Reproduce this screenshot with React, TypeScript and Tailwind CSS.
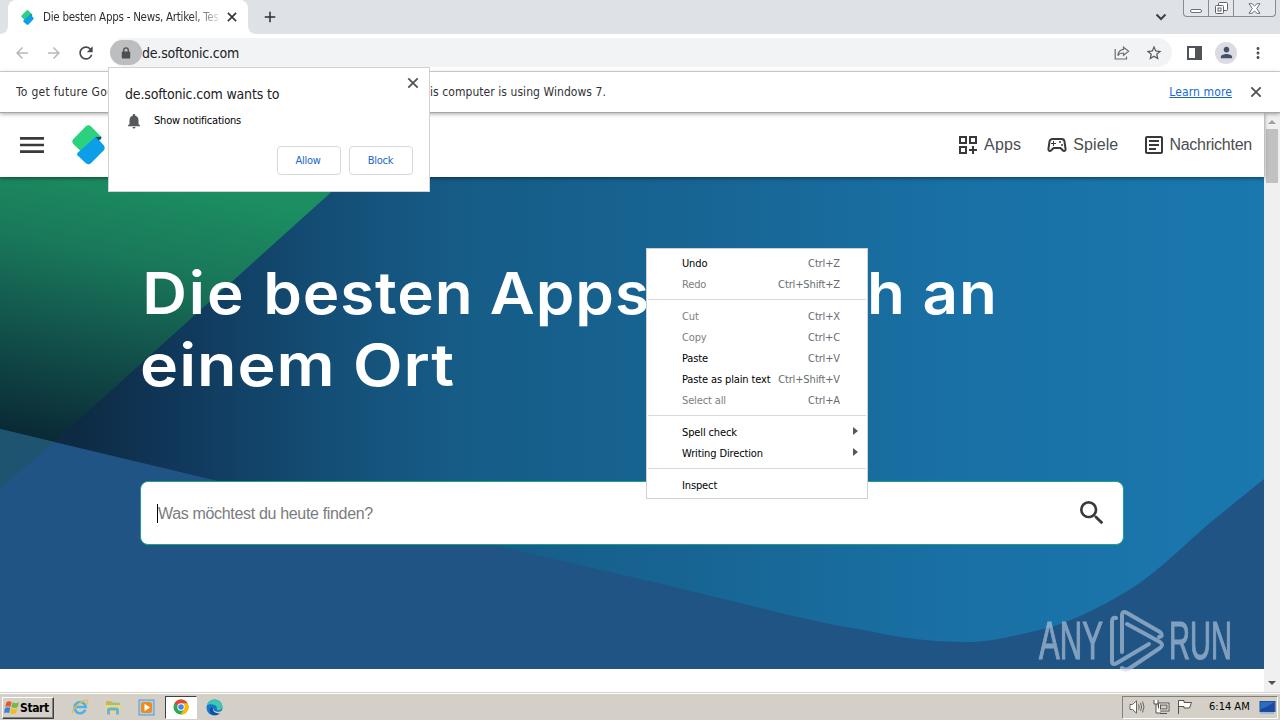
import type { ReactNode } from "react";
import {
  MdArrowBack,
  MdArrowForward,
  MdMenu,
  MdMoreVert,
  MdNotifications,
  MdOutlineArticle,
  MdOutlineDashboardCustomize,
  MdOutlineSportsEsports,
  MdPerson,
  MdRefresh,
  MdSearch,
  MdStarBorder,
  MdAdd,
} from "react-icons/md";

function SoftonicMark({ className }: { className: string }) {
  return (
    <svg viewBox="0 0 34 41" className={className} aria-hidden="true">
      <path d="M14.3 1.2Q17 -0.8 19.5 1.2L30 12L24 13.5L9 27L1.4 19.5Q-0.8 16.8 1.4 14.2Z" fill="#2bd17e" />
      <path d="M24.8 11.8L32.6 20.8Q34.8 23.5 32.6 26.2L19.5 39.4Q17 41.4 14.3 39.4L5.8 31.2Q4.6 30 5.8 28.4Z" fill="#0c9fe8" />
      <path d="M24.2 12.3L30.5 12L29.8 14.5L27.2 15.5Z" fill="#0b4f6c" />
    </svg>
  );
}

function CloseIcon({ className }: { className: string }) {
  return (
    <svg viewBox="0 0 16 16" className={className} fill="none" stroke="currentColor" strokeWidth="1.8" aria-hidden="true">
      <path d="M3.3 3.3L12.7 12.7M12.7 3.3L3.3 12.7" />
    </svg>
  );
}

function TabStrip() {
  return (
    <div className="flex h-[34px] shrink-0 items-stretch bg-[#dee1e6]">
      <div className="flex w-2 items-end bg-white">
        <div className="h-full w-2 rounded-br-lg bg-[#dee1e6]" />
      </div>
      <div className="flex w-60 items-center rounded-t-lg bg-white pl-[13px]">
        <SoftonicMark className="h-[15px] w-[13px]" />
        <span className="ml-[9px] mt-[2px] w-[175px] overflow-hidden whitespace-nowrap bg-linear-to-r from-[#2a2c30] from-85% to-[#d8dadd] bg-clip-text text-[11.5px] tracking-[-0.27px] text-transparent">
          Die besten Apps - News, Artikel, Tests
        </span>
        <CloseIcon className="ml-[7px] size-[14px] text-[#303236]" />
      </div>
      <div className="w-2 bg-white">
        <div className="h-full w-2 rounded-bl-lg bg-[#dee1e6]" />
      </div>
      <div className="flex flex-1 items-center pl-[5px]">
        <MdAdd className="size-[18px] text-[#2c2e33]" />
        <div className="flex-1" />
        <svg viewBox="0 0 16 16" className="size-4" fill="none" stroke="#3c4043" strokeWidth="2" aria-hidden="true">
          <path d="M3.5 5.5L8 10L12.5 5.5" />
        </svg>
        <div className="ml-[14px] mr-[4px] flex h-[17px] w-[93px] self-start rounded-b-[4px] border border-t-0 border-[#868b94] bg-[#e3e6eb]">
          <div className="flex w-[25px] items-end justify-center border-r border-[#868b94] pb-[3px]">
            <div className="h-1 w-3 rounded-xs border border-[#6b6f78] bg-white" />
          </div>
          <div className="flex w-[25px] items-center justify-center border-r border-[#868b94]">
            <svg viewBox="0 0 13 13" className="size-[13px]" fill="#fff" stroke="#5d616a" aria-hidden="true">
              <rect x="3.5" y="0.5" width="9" height="8" rx="1" />
              <rect x="0.5" y="3.5" width="8" height="8" rx="1" />
              <rect x="3" y="6" width="3" height="3" />
            </svg>
          </div>
          <div className="flex flex-1 items-center justify-center">
            <svg viewBox="0 0 13 11" className="h-[11px] w-[13px]" fill="#fff" stroke="#6b6f78" aria-hidden="true">
              <path d="M1 .7H4L6.5 3L9 .7H12L8.7 5.5L12 10.3H9L6.5 8L4 10.3H1L4.3 5.5Z" />
            </svg>
          </div>
        </div>
      </div>
    </div>
  );
}

function Toolbar() {
  return (
    <div className="flex h-[38px] shrink-0 items-center border-b border-[#d5d7da] bg-white pl-[13px]">
      <MdArrowBack className="size-[18px] text-[#b6b8bb]" />
      <MdArrowForward className="ml-[14px] size-[18px] text-[#b6b8bb]" />
      <MdRefresh className="ml-[13px] size-5 text-[#46494d]" />
      <div className="ml-[14px] flex h-[29px] w-[1062px] items-center rounded-full bg-[#f1f3f4]">
        <div className="flex h-[25px] w-8 items-center justify-center rounded-full bg-[#bcbebf]">
          <svg viewBox="0 0 10 12" className="h-3 w-[10px]" aria-hidden="true">
            <path d="M2.7 5V3.2A2.3 2.3 0 0 1 7.3 3.2V5" fill="none" stroke="#4d4f52" strokeWidth="1.3" />
            <rect x="0.8" y="4.5" width="8.4" height="7" rx="0.8" fill="#4d4f52" />
          </svg>
        </div>
        <span className="mt-px text-[14px] tracking-[-0.2px] text-[#202124]">de.softonic.com</span>
        <div className="flex-1" />
        <svg viewBox="0 0 16 14" className="h-[14px] w-4" fill="none" stroke="#6a6d71" strokeWidth="1.2" aria-hidden="true">
          <path d="M1.2 3V13H12.5V10.5" />
          <path d="M9.5 1.2L14.6 5.2L9.5 9.2V7C7 7 5 7.8 3.8 9.6C4.2 6.4 6 3.8 9.5 3.4Z" />
        </svg>
        <MdStarBorder className="ml-[15px] mr-[9px] size-[18px] text-[#55585c]" />
      </div>
      <div className="ml-[15px] flex h-[14px] w-[15px] border-2 border-[#505357]">
        <div className="ml-auto w-[5px] bg-[#505357]" />
      </div>
      <div className="ml-[13px] flex size-[22px] items-center justify-center rounded-full bg-[#dadce2]">
        <MdPerson className="size-[17px] text-[#44506e]" />
      </div>
      <MdMoreVert className="ml-[12px] size-[18px] text-[#505357]" />
    </div>
  );
}

function InfoBar() {
  return (
    <div className="z-10 flex h-[41px] shrink-0 items-center border-b border-[#a5a6a8] bg-white pl-4 pr-4 text-[12px] text-[#303236] shadow-[0_1px_4px_rgba(0,0,0,0.35)]">
      <span className="w-[414px] overflow-hidden whitespace-nowrap tracking-[0.28px]">
        To get future Google Chrome updates, you'll need Windows 10 or later. Th
      </span>
      <span className="whitespace-nowrap tracking-[0.06px]">is computer is using Windows 7.</span>
      <div className="flex-1" />
      <span className="tracking-[0.12px] text-[#1967d2] underline">Learn more</span>
      <CloseIcon className="ml-[16px] size-4 text-[#505357]" />
    </div>
  );
}

function NavItem({ icon, children }: { icon: ReactNode; children: ReactNode }) {
  return (
    <div className="flex items-center gap-[3px] whitespace-nowrap text-[16px] text-[#4c4d50]">
      {icon}
      {children}
    </div>
  );
}

function HeroArt() {
  return (
    <svg viewBox="0 177 1264 492" className="absolute inset-0 h-full w-full" aria-hidden="true">
      <defs>
        <linearGradient id="sea" gradientUnits="userSpaceOnUse" x1="0" y1="0" x2="1264" y2="0">
          <stop offset="0.06" stopColor="#0d2a42" />
          <stop offset="0.14" stopColor="#10385a" />
          <stop offset="0.26" stopColor="#144e76" />
          <stop offset="0.36" stopColor="#165c87" />
          <stop offset="0.52" stopColor="#176391" />
          <stop offset="0.75" stopColor="#1970a4" />
          <stop offset="1" stopColor="#1a78af" />
        </linearGradient>
        <linearGradient id="leaf" gradientUnits="userSpaceOnUse" x1="140" y1="177" x2="85" y2="445">
          <stop offset="0" stopColor="#1c8e61" />
          <stop offset="0.3" stopColor="#19785a" />
          <stop offset="0.65" stopColor="#12504a" />
          <stop offset="1" stopColor="#0a2a36" />
        </linearGradient>
      </defs>
      <rect x="0" y="177" width="1264" height="492" fill="url(#sea)" />
      <path d="M0 177H348L45 450L0 440Z" fill="url(#leaf)" />
      <path
        d="M0 429L222 482L502 547L640 579C720 597 800 620 864 630C900 638 930 642 966 642C990 642 1010 637 1048 628C1085 617 1130 592 1154 572C1175 555 1190 540 1211 522L1264 479V669H0Z"
        fill="#205484"
      />
      <path d="M0 429L54 442L0 489Z" fill="#1f5470" />
    </svg>
  );
}

function Page() {
  return (
    <div className="flex min-h-0 flex-1 bg-white">
      <div className="flex w-[1264px] flex-col font-['Liberation_Sans',sans-serif]">
        <header className="relative z-[1] flex h-16 shrink-0 items-center pl-4 pr-3 shadow-[0_1px_4px_rgba(0,0,0,0.5)]">
          <MdMenu className="size-8 text-[#38393b]" />
          <SoftonicMark className="ml-6 h-10 w-[33px]" />
          <div className="flex-1" />
          <div className="flex gap-6">
            <NavItem icon={<MdOutlineDashboardCustomize className="size-6 text-[#38393b]" />}>
              <span className="pl-px tracking-[0.2px]">Apps</span>
            </NavItem>
            <NavItem icon={<MdOutlineSportsEsports className="size-6 text-[#38393b]" />}>
              <span className="pl-px tracking-[0.1px]">Spiele</span>
            </NavItem>
            <NavItem icon={<MdOutlineArticle className="size-6 text-[#38393b]" />}>
              <span className="tracking-[-0.25px]">Nachrichten</span>
            </NavItem>
          </div>
        </header>
        <section className="relative h-[492px] shrink-0">
          <HeroArt />
          <div className="relative flex flex-col pl-[140px] pr-[140px] pt-[80px]">
            <h1 className="h-[224px] whitespace-nowrap font-['Inter',sans-serif] text-[58px] font-semibold leading-[72px] tracking-[0.9px] text-white">
              <span className="block origin-left scale-x-[1.067] pl-[2px]">
                <span className="tracking-[1.9px]">Die </span>
                <span className="tracking-[0.8px]">besten </span>
                <span>Apps </span>
                <span className="tracking-[2.4px]">einfac</span>h an
              </span>
              <span className="block origin-left scale-x-[1.112]">einem Ort</span>
            </h1>
            <div className="flex h-16 items-center rounded-lg border border-[#20a08a] bg-white pl-4 pr-[15px]">
              <div className="h-[19px] w-px bg-black" />
              <span className="mt-px text-[16px] tracking-[-0.33px] text-[#7b7c7e]">Was möchtest du heute finden?</span>
              <div className="flex-1" />
              <MdSearch className="size-8 text-[#38393b]" />
            </div>
          </div>
        </section>
      </div>
      <div className="flex w-4 flex-col items-center bg-[#f0f0f0] pt-[7px]">
        <div className="border-x-4 border-b-4 border-x-transparent border-b-[#a0a0a0]" />
        <div className="mt-[5px] h-[54px] w-3 bg-[#c1c1c1]" />
        <div className="flex-1" />
        <div className="mb-[7px] border-x-4 border-t-4 border-x-transparent border-t-[#505050]" />
      </div>
    </div>
  );
}

function PermissionPopup() {
  return (
    <div className="absolute left-[108px] top-[67px] z-20 flex h-[125px] w-[322px] flex-col border border-[#d0d2d5] bg-white px-4 text-[#202124]">
      <div className="flex h-[36px] items-end justify-between">
        <span className="text-[14px] leading-[20px] tracking-[-0.17px]">de.softonic.com wants to</span>
        <CloseIcon className="-mr-[8px] mb-[13px] size-4 text-[#505357]" />
      </div>
      <div className="mt-[8px] flex h-[18px] items-center">
        <MdNotifications className="size-[18px] text-[#55585c]" />
        <span className="ml-[11px] text-[11px] tracking-[-0.2px] text-black">Show notifications</span>
      </div>
      <div className="mt-[16px] flex justify-end gap-2 text-[11px] tracking-[-0.25px] text-[#1967c8]">
        <div className="flex h-[29px] w-16 items-center justify-center rounded-[4px] border border-[#d5d8dc] pr-[2px] pt-px">Allow</div>
        <div className="flex h-[29px] w-16 items-center justify-center rounded-[4px] border border-[#d5d8dc] pr-px pt-px">Block</div>
      </div>
    </div>
  );
}

type Entry = { label: string; keys?: string; off?: boolean; sub?: boolean };

const groups: Entry[][] = [
  [
    { label: "Undo", keys: "Ctrl+Z" },
    { label: "Redo", keys: "Ctrl+Shift+Z", off: true },
  ],
  [
    { label: "Cut", keys: "Ctrl+X", off: true },
    { label: "Copy", keys: "Ctrl+C", off: true },
    { label: "Paste", keys: "Ctrl+V" },
    { label: "Paste as plain text", keys: "Ctrl+Shift+V" },
    { label: "Select all", keys: "Ctrl+A", off: true },
  ],
  [
    { label: "Spell check", sub: true },
    { label: "Writing Direction", sub: true },
  ],
  [{ label: "Inspect" }],
];

function ContextMenu() {
  return (
    <div className="absolute left-[646px] top-[248px] z-20 h-[251px] w-[222px] border border-[#cfd1d4] bg-white px-px pt-1 text-[11px] tracking-[-0.13px]">
      {groups.map((group, g) => (
        <div key={g} className={g > 0 ? "mt-[4px] border-t border-[#d8dadc] pt-[6px]" : ""}>
          {group.map((e) => (
            <div key={e.label} className="flex h-[21px] items-center pl-[34px] pr-2">
              <span className={e.off ? "mt-[2px] text-[#7c7e80]" : "mt-[2px] text-black"}>{e.label}</span>
              <div className="flex-1" />
              {e.keys && <span className="mr-[18px] mt-[2px] text-[#6a6c6e]">{e.keys}</span>}
              {e.sub && <div className="mb-[3px] border-y-4 border-l-[5px] border-y-transparent border-l-[#55585c]" />}
            </div>
          ))}
        </div>
      ))}
    </div>
  );
}

function Watermark() {
  return (
    <svg viewBox="0 0 196 66" className="absolute left-[1037px] top-[608px] z-10 h-[66px] w-[196px] opacity-60" aria-hidden="true">
      <g fill="#c3d3e4" stroke="#c3d3e4" strokeWidth="1.2" fontFamily="Liberation Sans Narrow, Liberation Sans, sans-serif" fontSize="53">
        <text x="2" y="51" textLength="64" lengthAdjust="spacingAndGlyphs">ANY</text>
        <text x="132" y="51" textLength="63" lengthAdjust="spacingAndGlyphs">RUN</text>
      </g>
      <g fill="none" stroke="#c3d3e4" strokeWidth="4" strokeLinecap="round" strokeLinejoin="round">
        <path d="M79 10Q75 9 75 14V53Q75 58 80 55L112 36" />
        <path d="M85 44V8Q85 2 90 5L123 24Q127 28 122 29" />
        <path d="M90 16L123 34Q127 37 123 40L93 60Q88 63 85 60" />
      </g>
    </svg>
  );
}

function Taskbar() {
  return (
    <div className="flex h-7 shrink-0 items-center border-t border-[#d4d0c8] bg-[#d4d0c8] pl-[2px] shadow-[inset_0_1px_0_#fff]">
      <div className="mt-[2px] flex h-[22px] w-[52px] items-center border border-b-[#404040] border-l-white border-r-[#404040] border-t-white pl-px shadow-[inset_-1px_-1px_0_#808080]">
        <svg viewBox="0 0 16 15" className="h-[15px] w-4 shrink-0" aria-hidden="true">
          <path d="M2.5 2Q5 .5 7.5 2L6.5 7Q4 5.5 1.2 7Z" fill="#e8572a" />
          <path d="M8.5 2.3Q11.5 4 15 2.2L13.6 7.2Q10.5 8.8 7.4 7.2Z" fill="#77b843" />
          <path d="M1 8Q3.8 6.6 6.3 8L5.1 13Q2.4 11.8 0 13Z" fill="#3b83cf" />
          <path d="M7.2 8.3Q10.3 9.8 13.4 8.2L12.1 13.2Q9 14.8 6 13.2Z" fill="#f5bd25" />
        </svg>
        <span className="text-[12px] font-bold tracking-[-0.4px] text-black">Start</span>
      </div>
      <svg viewBox="0 0 18 18" className="ml-[17px] mt-px size-[18px]" fill="none" aria-hidden="true">
        <path d="M14.3 11.8A5.6 5.6 0 1 1 14.7 9H5" stroke="#4fb0e4" strokeWidth="2.6" />
        <path d="M1.5 15.5C-.5 12 12 .5 16.3 2.3C17.5 3 16.5 5 16 6" stroke="#e9bd3e" strokeWidth="1.3" />
      </svg>
      <svg viewBox="0 0 18 18" className="ml-[15px] mt-px size-[18px]" aria-hidden="true">
        <path d="M2 3H7L8.5 4.5H15V14H2Z" fill="#d9b24e" />
        <path d="M3.5 5H16V8H3.5Z" fill="#8cc98a" />
        <path d="M1.5 7H16.5L16 15H2Z" fill="#f1d67a" />
        <path d="M3 16.5V12Q3 9.5 6 9.5H12Q15 9.5 15 12V16.5H12V12.5H6V16.5Z" fill="#63b5de" />
      </svg>
      <svg viewBox="0 0 17 17" className="ml-[16px] mt-px size-[17px]" aria-hidden="true">
        <rect x="1" y="1" width="15" height="15" fill="#a9d0ea" stroke="#5c98c6" />
        <rect x="3" y="3" width="11" height="11" rx="2.5" fill="#f08a1c" />
        <path d="M6.5 4.8L12 8.5L6.5 12.2Z" fill="#fff" />
      </svg>
      <div className="ml-[10px] mt-px flex h-[23px] w-8 items-center justify-center border border-b-white border-l-[#404040] border-r-white border-t-[#404040] bg-white">
        <svg viewBox="0 0 18 18" className="size-4" aria-hidden="true">
          <circle cx="9" cy="9" r="8.5" fill="#33a852" />
          <path d="M9 9L1.6 4.8A8.5 8.5 0 0 1 16.4 4.8H9Z" fill="#ea4335" />
          <path d="M9 4.8H16.4A8.5 8.5 0 0 1 8.6 17.5L12.8 11Z" fill="#fbbc04" />
          <circle cx="9" cy="9" r="4.1" fill="#fff" />
          <circle cx="9" cy="9" r="3.1" fill="#4285f4" />
        </svg>
      </div>
      <svg viewBox="0 0 18 18" className="ml-[9px] mt-px size-[17px]" aria-hidden="true">
        <circle cx="9" cy="9" r="8.5" fill="#1577c8" />
        <path d="M.8 7A8.5 8.5 0 0 1 17.5 8.3C17.5 11 15 12 12.5 11.8C10.5 11.6 12 10.5 11.5 9C10.5 5.5 4 4.5 .8 7Z" fill="#3fc6b2" />
        <path d="M7 9C6 13 10 16 15 14.2C12 18.5 4 18 4 12C4 10 5.3 8.8 7 9Z" fill="#0c4f9e" />
        <path d="M8 9C7 12 10 14.2 15.2 13.3Q18 12 17.5 10L18 14L16 15C10 16.5 6 12 8 9Z" fill="#d4d0c8" />
      </svg>
      <div className="flex-1" />
      <div className="mr-[2px] mt-px flex h-[23px] w-[156px] items-center border border-b-white border-l-[#808080] border-r-white border-t-[#808080] pl-[6px]">
        <svg viewBox="0 0 16 16" className="size-4" fill="#fff" stroke="#68665f" aria-hidden="true">
          <path d="M1 5.5H3.5L7.5 1.8V14.2L3.5 10.5H1Z" />
          <path d="M9.5 5.5Q11 8 9.5 10.5M11.5 4Q13.8 8 11.5 12M13.5 2.5Q16.5 8 13.5 13.5" fill="none" />
        </svg>
        <svg viewBox="0 0 17 16" className="ml-[8px] h-4 w-[17px]" fill="#fff" stroke="#55534e" aria-hidden="true">
          <rect x="5.5" y="4" width="10.5" height="8" />
          <rect x="7.5" y="6" width="6.5" height="4" fill="#d4d0c8" />
          <path d="M1 1V5H5V1M3 5V14H8M7 14.5H14" />
        </svg>
        <svg viewBox="0 0 16 16" className="ml-[7px] size-4" fill="#fff" stroke="#55534e" aria-hidden="true">
          <path d="M1.5 15V1.5H7V3.5H14.5L12.5 9H7V7.5H2" />
        </svg>
        <span className="ml-[16px] mt-px whitespace-nowrap text-[11px] text-black">6:14 AM</span>
        <div className="flex-1" />
        <svg viewBox="0 0 17 13" className="mr-px h-[13px] w-[17px]" aria-hidden="true">
          <rect x="1" y="0.5" width="15" height="10" fill="#2b6cc4" stroke="#204f96" />
          <path d="M2 8Q9 6 15 1V10H2Z" fill="#1d479f" />
          <path d="M1 12H15" stroke="#8bb2de" strokeWidth="1.5" />
        </svg>
      </div>
    </div>
  );
}

export default function App() {
  return (
    <div className="relative flex h-[720px] w-[1280px] flex-col overflow-hidden bg-white font-['DejaVu_Sans_Condensed','DejaVu_Sans',sans-serif]">
      <TabStrip />
      <Toolbar />
      <InfoBar />
      <Page />
      <Taskbar />
      <PermissionPopup />
      <ContextMenu />
      <Watermark />
    </div>
  );
}
